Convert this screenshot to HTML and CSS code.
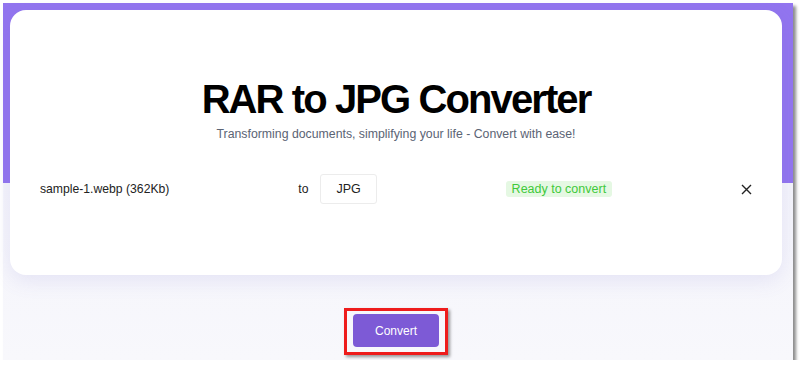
FILE: index.html
```html
<!DOCTYPE html>
<html>
<head>
  <title>RAR to JPG Converter</title>
  <link rel="stylesheet" href="styles.css">
</head>
<body>
  <div class="frame">
    <div class="card">
      <h1>RAR to JPG Converter</h1>
      <p class="tagline">Transforming documents, simplifying your life - Convert with ease!</p>

      <div class="file-row">
        <span class="file-name">sample-1.webp (362Kb)</span>
        <div class="target">
          <span class="to">to</span>
          <span class="format">JPG</span>
        </div>
        <span class="status">Ready to convert</span>
        <button class="remove" aria-label="Remove">
          <svg width="11" height="11" viewBox="0 0 11 11">
            <path d="M1 1 L10 10 M10 1 L1 10" stroke="#222" stroke-width="1.4" fill="none"/>
          </svg>
        </button>
      </div>
    </div>

    <div class="actions">
      <span class="highlight">
        <button class="convert-btn">Convert</button>
      </span>
    </div>
  </div>
</body>
</html>
```

FILE: styles.css
```css
body {
  margin: 0;
  background: #fff;
  font-family: 'Liberation Sans', Arial, sans-serif;
}
.frame {
  box-sizing: border-box;
  width: 790px;
  height: 357px;
  margin: 3px 0 0 3px;
  padding: 7px 11px 0 7px;
  background: linear-gradient(#9275ef 0, #9275ef 180px, #f4f4fb 180px, #f8f8fc 100%);
  box-shadow: 3px 3px 3px rgba(0, 0, 0, 0.45);
}
.card {
  box-sizing: border-box;
  height: 265px;
  padding: 65px 30px 0 30px;
  background: #fff;
  border-radius: 16px;
  box-shadow: 0 6px 20px rgba(110, 100, 200, 0.12);
}
h1 {
  margin: 0;
  font-size: 40px;
  line-height: 48px;
  font-weight: 700;
  letter-spacing: -1.9px;
  text-align: center;
  color: #000;
}
.tagline {
  margin: 2px 0 0;
  font-size: 12.3px;
  line-height: 18px;
  text-align: center;
  color: #5b6474;
}
.file-row {
  display: flex;
  align-items: center;
  justify-content: space-between;
  margin-top: 31px;
  font-size: 12.2px;
  color: #222;
}
.target {
  display: flex;
  align-items: center;
  gap: 12px;
}
.format {
  padding: 7px 15px;
  border: 1px solid #ececec;
  border-radius: 3px;
  font-size: 12.5px;
}
.status {
  padding: 1px 6px;
  border-radius: 3px;
  background: #e5f8e3;
  color: #3fc93a;
  font-size: 12.5px;
}
.remove {
  padding: 0;
  border: 0;
  background: none;
  display: flex;
}
.actions {
  display: flex;
  justify-content: center;
  padding-top: 33px;
}
.highlight {
  display: inline-block;
  padding: 3px 6px 5px;
  border: 3px solid #ee1c1c;
  box-shadow: 2px 2px 3px rgba(0, 0, 0, 0.4);
}
.convert-btn {
  display: block;
  width: 86px;
  height: 33px;
  border: 0;
  border-radius: 4px;
  background: #7d5ad6;
  color: #fff;
  font-family: 'Liberation Sans', Arial, sans-serif;
  font-size: 12px;
}
```
